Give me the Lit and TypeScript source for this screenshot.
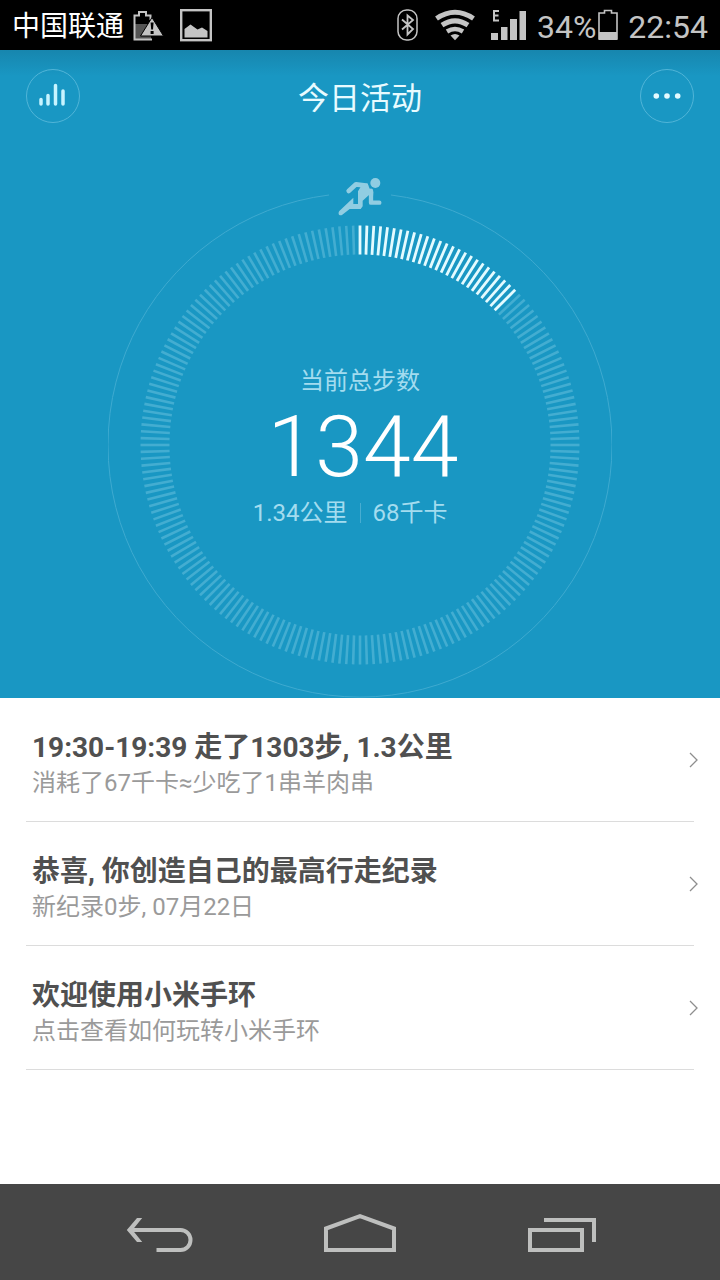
import { LitElement, html, css, svg } from "lit";
import { customElement } from "lit/decorators.js";

interface Entry {
  title: string;
  detail: string;
}

const TICKS = 200;
const DONE = 26;

const ENTRIES: Entry[] = [
  { title: "19:30-19:39 走了1303步, 1.3公里", detail: "消耗了67千卡≈少吃了1串羊肉串" },
  { title: "恭喜, 你创造自己的最高行走纪录", detail: "新纪录0步, 07月22日" },
  { title: "欢迎使用小米手环", detail: "点击查看如何玩转小米手环" },
];

@customElement("status-bar")
class StatusBar extends LitElement {
  static styles = css`
    :host {
      display: flex;
      align-items: center;
      justify-content: space-between;
      height: 50px;
      padding: 0 12px;
      background: #000;
      color: #c4c4c4;
      font-size: 32px;
      line-height: 50px;
    }
    .group {
      display: flex;
      align-items: center;
    }
    .carrier {
      padding-top: 4px;
      font-size: 28px;
      line-height: 46px;
      color: #fff;
    }
    .notices {
      gap: 16px;
    }
    .notice-first {
      display: flex;
      align-items: center;
      gap: 8px;
    }
    .system {
      gap: 16px;
    }
    .power {
      display: flex;
      align-items: center;
      gap: 2px;
    }
    .signal {
      gap: 10px;
    }
    .clock {
      margin-left: -6px;
    }
    .text {
      padding-top: 4px;
      line-height: 46px;
    }
    svg {
      display: block;
      flex: none;
    }
  `;

  render() {
    return html`
      <div class="group notices">
        <div class="notice-first">
          <span class="carrier">中国联通</span>
          <svg width="32" height="34" viewBox="0 0 32 34">
            <path d="M3 16h16v15H3z" fill="#555" />
            <path d="M20 31.500H2.500V7.500H7V4h7v3.500h4.500V12" fill="none" stroke="#c4c4c4" stroke-width="2" />
            <path d="M20 9.500 31.500 28H8.500z" fill="#c4c4c4" stroke="#000" stroke-width="1" />
            <path d="M18.600 14.500h3l-.6 7h-1.800zM18.600 23h3v3h-3z" fill="#000" />
          </svg>
        </div>
        <svg width="32" height="34" viewBox="0 0 32 34">
          <rect x="1.200" y="2.200" width="29.600" height="30" fill="none" stroke="#c4c4c4" stroke-width="2.400" />
          <path d="M4.500 29.500V21l6-4.500 7 5 4.500-2 5.500 3.500v6.500z" fill="#c4c4c4" />
        </svg>
      </div>
      <div class="group system">
        <svg width="22" height="32" viewBox="0 0 22 32">
          <rect x="1" y="1" width="19" height="30" rx="8.500" fill="none" stroke="#c4c4c4" stroke-width="1.500" />
          <path d="M5 10.500 16 20l-5.500 5.500v-19L16 11 5 20.500" fill="none" stroke="#c4c4c4" stroke-width="1.800" />
        </svg>
        <svg width="40" height="32" viewBox="0 0 40 32">
          <g fill="none" stroke="#c4c4c4" stroke-width="5">
            <path d="M1.500 9.500Q20-3 38.500 9.500" />
            <path d="M7 16.200Q20 7.500 33 16.200" />
            <path d="M12 22.500Q20 17.500 28 22.500" stroke-width="4.500" />
          </g>
          <path d="M15.500 26.500q4.500-3 9 0l-4.500 4.800z" fill="#c4c4c4" />
        </svg>
        <div class="group signal">
          <svg width="36" height="32" viewBox="0 0 36 32">
            <path d="M8 2H3v9.500h5M3 6.500h4.500" fill="none" stroke="#c4c4c4" stroke-width="2" />
            <path d="M0 24h7v7H0zM10 18h6.500v13H10zM19 10h7v21h-7zM28.500 2h6.500v29h-6.500z" fill="#c4c4c4" />
          </svg>
          <div class="power">
            <span class="text">34%</span>
            <svg width="20" height="32" viewBox="0 0 20 32">
              <path d="M1 30V4h5.500V1.500h7V4H19v26z" fill="none" stroke="#c4c4c4" stroke-width="1.600" />
              <path d="M1 23h18v8H1z" fill="#c4c4c4" />
            </svg>
          </div>
        </div>
        <span class="text clock">22:54</span>
      </div>
    `;
  }
}

@customElement("step-ring")
class StepRing extends LitElement {
  static styles = css`
    :host {
      display: grid;
      width: 504px;
      max-width: 100%;
      margin: 0 auto;
    }
    .dial,
    .summary {
      grid-area: 1 / 1;
    }
    .dial {
      display: block;
      width: 100%;
    }
    .summary {
      align-self: center;
      padding-top: 20px;
      text-align: center;
      color: #a3dcef;
      font-size: 24px;
      line-height: 32px;
    }
    .count {
      padding-left: 6px;
      color: #fff;
      font-size: 86px;
      font-weight: 300;
      line-height: 100px;
    }
    .totals {
      display: grid;
      grid-template-columns: 1fr 1px 1fr;
      align-items: center;
      gap: 12px;
    }
    .distance {
      text-align: right;
    }
    .energy {
      text-align: left;
    }
    .divider {
      height: 20px;
      background: #48add1;
    }
  `;

  render() {
    const ticks = Array.from({ length: TICKS }, (_, i) => {
      const a = (i * 2 * Math.PI) / TICKS;
      const s = Math.sin(a);
      const c = -Math.cos(a);
      return svg`<line x1=${s * 190.500} y1=${c * 190.500} x2=${s * 219.500} y2=${c * 219.500}
        stroke=${i < DONE ? "#e4fbff" : "#43add1"} stroke-width=${i < DONE ? 2.800 : 2.600} />`;
    });
    return html`
      <svg class="dial" viewBox="-252 -269 504 522" aria-hidden="true">
        <path d="M31-250A252 252 0 1 1-31-250" fill="none" stroke="#3eaad0" stroke-width="1" />
        ${ticks}
        <g transform="translate(-50 -285) scale(.33333)" fill="#fff" stroke="#fff" opacity=".52">
          <circle cx="196" cy="69" r="15" stroke="none" />
          <path d="M116 93 138 73 168 77" fill="none" stroke-width="14" stroke-linecap="round" stroke-linejoin="round" />
          <path d="M183 92V128H208" fill="none" stroke-width="13" stroke-linecap="round" stroke-linejoin="round" />
          <path d="M144 94 155 76 172 70 180 88 190 95 189 110 176 106 158 122V139L152 147H119L97 164Q92 168 87 164 84 159 88 153L130 113V132H144Z" stroke="none" />
        </g>
      </svg>
      <div class="summary">
        <div>当前总步数</div>
        <div class="count">1344</div>
        <div class="totals">
          <span class="distance">1.34公里</span>
          <span class="divider"></span>
          <span class="energy">68千卡</span>
        </div>
      </div>
    `;
  }
}

@customElement("activity-list")
class ActivityList extends LitElement {
  static styles = css`
    :host {
      display: block;
      background: #fff;
    }
    .list {
      margin: 0;
      padding: 0 26px;
      list-style: none;
    }
    .item {
      border-bottom: 1px solid #dcdcdc;
    }
    .link {
      display: flex;
      align-items: center;
      justify-content: space-between;
      padding: 30px 0 22px 6px;
      color: #9a9a9a;
      text-decoration: none;
    }
    .title {
      display: block;
      color: #505050;
      font-size: 28px;
      font-weight: 700;
      line-height: 39px;
    }
    .detail {
      display: block;
      font-size: 24px;
      line-height: 32px;
    }
    .chevron {
      flex: none;
      margin: 0 -4px 8px 0;
    }
  `;

  render() {
    return html`
      <ul class="list">
        ${ENTRIES.map(
          (e) => html`
            <li class="item">
              <a class="link" href="#">
                <span>
                  <span class="title">${e.title}</span>
                  <span class="detail">${e.detail}</span>
                </span>
                <svg class="chevron" width="9" height="16" viewBox="0 0 9 16">
                  <path d="M1 1 8 8 1 15" fill="none" stroke="#8e8e8e" stroke-width="1.300" />
                </svg>
              </a>
            </li>
          `,
        )}
      </ul>
    `;
  }
}

@customElement("nav-bar")
class NavBar extends LitElement {
  static styles = css`
    :host {
      display: block;
      background: #464646;
    }
    .keys {
      display: flex;
      max-width: 600px;
      height: 96px;
      margin: 0 auto;
    }
    .key {
      display: flex;
      flex: 1;
      align-items: center;
      justify-content: center;
      padding: 0;
      border: 0;
      background: none;
    }
    .icon {
      fill: none;
      stroke: #bebfbe;
      stroke-width: 4;
    }
  `;

  render() {
    return html`
      <nav class="keys">
        <button class="key" aria-label="返回">
          <svg class="icon" width="72" height="40" viewBox="124 1212 72 40">
            <path d="M130 1230H180.500A10 10 0 0 1 180.500 1250H156.500" />
            <path d="M137 1218H142.200L132.500 1230 142.200 1242H137L126.800 1230Z" fill="#bebfbe" stroke="none" />
          </svg>
        </button>
        <button class="key" aria-label="主页">
          <svg class="icon" width="72" height="40" viewBox="324 1212 72 40">
            <path d="M326 1250V1228.500L360 1216.200 394 1228.500V1250Z" />
          </svg>
        </button>
        <button class="key" aria-label="最近任务">
          <svg class="icon" width="72" height="40" viewBox="524 1212 72 40">
            <path d="M530 1230H582V1250H530ZM544 1220H594V1242" />
          </svg>
        </button>
      </nav>
    `;
  }
}

@customElement("app-root")
class AppRoot extends LitElement {
  static styles = css`
    :host {
      display: flex;
      flex-direction: column;
      min-height: 100vh;
      background: #fff;
      font-family: Roboto, "Noto Sans CJK SC", sans-serif;
    }
    .hero {
      background: linear-gradient(#1786ae, #1997c3 26px);
    }
    .header {
      display: flex;
      align-items: center;
      justify-content: space-between;
      padding: 19px 26px 0;
    }
    .heading {
      margin: 0;
      padding-top: 6px;
      color: #e8fbff;
      font-size: 31px;
      font-weight: 400;
      line-height: 48px;
    }
    .round {
      box-sizing: border-box;
      width: 54px;
      height: 54px;
      padding: 0;
      border: 1px solid #51b5d8;
      border-radius: 50%;
      background: none;
    }
    .glyph {
      display: block;
      margin: auto;
    }
    .ring {
      margin-top: 53px;
    }
    .feed {
      flex: 1;
    }
  `;

  render() {
    return html`
      <status-bar></status-bar>
      <section class="hero">
        <header class="header">
          <button class="round" aria-label="统计">
            <svg class="glyph" width="28" height="28" viewBox="0 0 28 28">
              <path d="M2 17.500V22M9 13.500V22M16.500 3.500V22M24 9V22" fill="none" stroke="#c8f4ff" stroke-width="3.500" stroke-linecap="round" />
            </svg>
          </button>
          <h1 class="heading">今日活动</h1>
          <button class="round" aria-label="更多">
            <svg class="glyph" width="28" height="8" viewBox="0 0 28 8">
              <g fill="#e4fbff">
                <circle cx="3.300" cy="4" r="2.800" />
                <circle cx="14" cy="4" r="2.800" />
                <circle cx="24.700" cy="4" r="2.800" />
              </g>
            </svg>
          </button>
        </header>
        <div class="ring"><step-ring></step-ring></div>
      </section>
      <activity-list class="feed"></activity-list>
      <nav-bar></nav-bar>
    `;
  }
}
